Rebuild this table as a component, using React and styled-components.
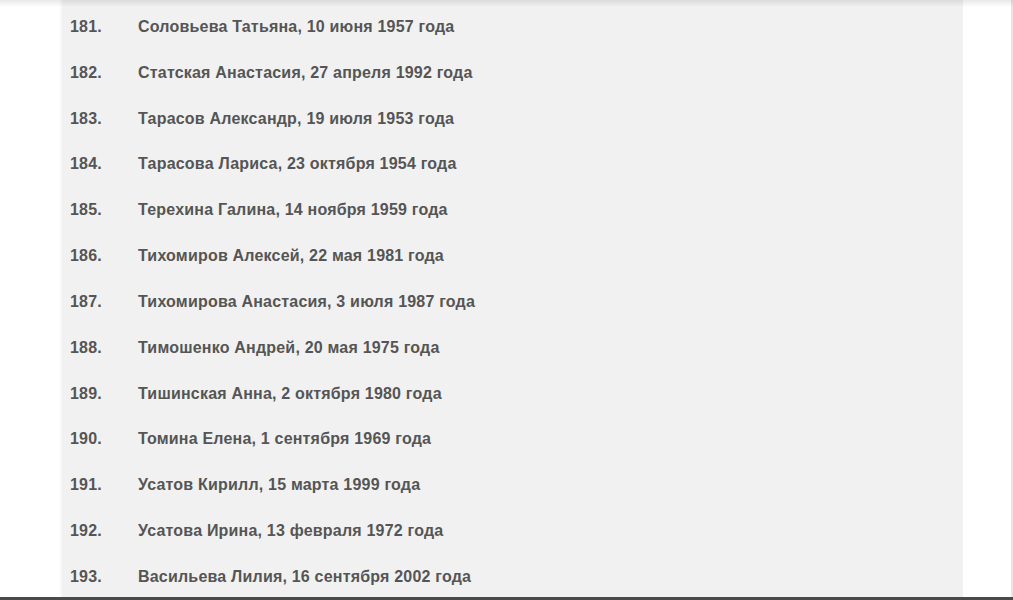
import React from "react";
import styled, { createGlobalStyle } from "styled-components";

const people = [
  [181, "Соловьева Татьяна, 10 июня 1957 года"],
  [182, "Статская Анастасия, 27 апреля 1992 года"],
  [183, "Тарасов Александр, 19 июля 1953 года"],
  [184, "Тарасова Лариса, 23 октября 1954 года"],
  [185, "Терехина Галина, 14 ноября 1959 года"],
  [186, "Тихомиров Алексей, 22 мая 1981 года"],
  [187, "Тихомирова Анастасия, 3 июля 1987 года"],
  [188, "Тимошенко Андрей, 20 мая 1975 года"],
  [189, "Тишинская Анна, 2 октября 1980 года"],
  [190, "Томина Елена, 1 сентября 1969 года"],
  [191, "Усатов Кирилл, 15 марта 1999 года"],
  [192, "Усатова Ирина, 13 февраля 1972 года"],
  [193, "Васильева Лилия, 16 сентября 2002 года"],
];

const GlobalStyle = createGlobalStyle`
  html, body {
    margin: 0;
    padding: 0;
    background: #fff;
    overflow: hidden;
  }
`;

function App() {
  return (
    <>
      <GlobalStyle />
      <Page>
        <TopShade />
        <Panel>
          <List>
            {people.map(([n, text]) => (
              <Row key={n}>
                <Num>{n}.</Num>
                <Name>{text}</Name>
              </Row>
            ))}
          </List>
        </Panel>
        <Side />
        <BottomBar />
      </Page>
    </>
  );
}

export default App;

const Page = styled.div`
  position: relative;
  width: 1013px;
  height: 600px;
  display: flex;
  background: #fff;
  overflow: hidden;
`;

const TopShade = styled.div`
  position: absolute;
  left: 0;
  right: 0;
  top: 0;
  height: 7px;
  background: linear-gradient(to bottom, rgba(0, 0, 0, 0.09), rgba(0, 0, 0, 0));
  z-index: 2;
`;

const Panel = styled.div`
  margin-left: 62px;
  width: 901px;
  height: 597px;
  background: #f1f1f1;
  box-shadow: -2px 0 2px rgba(0, 0, 0, 0.03);
`;

const Side = styled.div`
  flex: 1;
  border-right: 2px solid #e6e6e6;
`;

const List = styled.div`
  padding: 4px 0 0 8px;
`;

const Row = styled.div`
  display: grid;
  grid-template-columns: 68px 1fr;
  height: 45.83px;
  align-items: center;
  font-family: "Liberation Sans", Arial, sans-serif;
  font-weight: bold;
  font-size: 16px;
  letter-spacing: 0.2px;
  color: #555;
`;

const Num = styled.span``;

const Name = styled.span``;

const BottomBar = styled.div`
  position: absolute;
  left: 0;
  right: 0;
  bottom: 0;
  height: 3px;
  background: #4a4a4a;
`;
